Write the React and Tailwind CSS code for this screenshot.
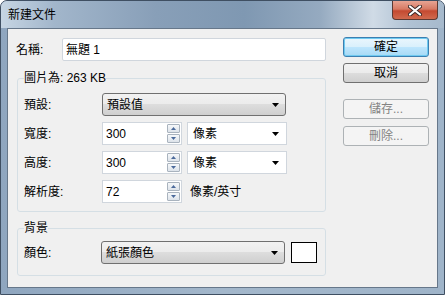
import React from 'react';

const Arrow = () => (
  <svg width="7" height="4" viewBox="0 0 7 4" className="shrink-0">
    <polygon points="0,0 7,0 3.5,4" fill="#000" />
  </svg>
);

const SpinBtn = ({ up }) => (
  <div className="flex h-[9px] w-[13px] items-center justify-center rounded-[1px] border border-[#a9b3be] bg-[linear-gradient(#f6f8fa,#dde3ea)]">
    <svg width="5" height="3" viewBox="0 0 5 3">
      <polygon points={up ? '0,3 5,3 2.5,0' : '0,0 5,0 2.5,3'} fill="#4b6a9b" />
    </svg>
  </div>
);

const Spinner = ({ value }) => (
  <div className="flex h-[23px] w-[80px] items-center border border-[#d0d6dd] bg-white pl-[3px] pr-[1px]">
    <span className="flex-1">{value}</span>
    <div className="flex flex-col gap-[1px]">
      <SpinBtn up />
      <SpinBtn />
    </div>
  </div>
);

const UnitSelect = ({ value }) => (
  <div className="flex h-[23px] w-[100px] items-center justify-between border border-[#d0d6dd] bg-white pl-[5px] pr-[7px]">
    <span>{value}</span>
    <Arrow />
  </div>
);

const ComboButton = ({ value, width }) => (
  <div
    className={`flex h-[23px] ${width} items-center justify-between rounded-[3px] border border-[#707070] bg-[linear-gradient(#f2f2f2_0%,#ebebeb_50%,#dddddd_50%,#cfcfcf_100%)] pl-[4px] pr-[6px]`}
  >
    <span>{value}</span>
    <Arrow />
  </div>
);

const Row = ({ label, children }) => (
  <div className="flex h-[23px] items-center">
    <span className="w-[78px]">{label}</span>
    {children}
  </div>
);

const DialogButton = ({ children, kind }) => {
  const styles = {
    default: 'border-[#3c7fb1] bg-[linear-gradient(#eaf6fd_0%,#d9f0fc_50%,#bee6fd_50%,#a7d9f5_100%)] shadow-[inset_0_0_0_1px_#6fcaf0] text-black',
    normal: 'border-[#707070] bg-[linear-gradient(#f2f2f2_0%,#ebebeb_50%,#dddddd_50%,#cfcfcf_100%)] text-black',
    disabled: 'border-[#adb2b5] bg-[#f4f4f4] text-[#838383]',
  };
  return (
    <div className={`flex h-[20px] w-[86px] items-center justify-center rounded-[3px] border ${styles[kind]}`}>
      {children}
    </div>
  );
};

export default function App() {
  return (
    <div className="flex h-[295px] w-[445px] flex-col overflow-hidden rounded-t-[7px] border border-[#3f4f62] bg-[linear-gradient(90deg,#8fa6bf_0%,#a3b7cb_50%,#9fb4c9_100%)] font-['Liberation_Sans','Noto_Sans_CJK_TC',sans-serif] text-[12px] leading-none text-black">
      {/* title bar */}
      <div className="flex h-[27px] items-start justify-between bg-[linear-gradient(90deg,#c6d5e3_0%,#a2b6cb_12%,#889fb8_35%,#7f98b2_55%,#95aac0_72%,#d0dbe6_84%,#b0c2d4_92%,#a6b9cc_100%)]">
        <span className="ml-[7px] mt-[8px] text-[12px]">新建文件</span>
        <div className="mr-[6px] flex h-[19px] w-[46px] items-center justify-center rounded-b-[4px] border border-t-0 border-[#5b3a33] bg-[linear-gradient(#e8a493_0%,#d77a64_45%,#c44a31_55%,#d06a4e_100%)]">
          <svg width="14" height="11" viewBox="0 0 14 11">
            <path d="M2 1.5 L12 9.5 M12 1.5 L2 9.5" stroke="#3b2a28" strokeWidth="4" strokeLinecap="round" />
            <path d="M2 1.5 L12 9.5 M12 1.5 L2 9.5" stroke="#ffffff" strokeWidth="2.2" strokeLinecap="round" />
          </svg>
        </div>
      </div>

      {/* client area */}
      <div className="mx-[6px] flex flex-1 border border-[#66778a] bg-[#f0f0f0]">
        <div className="flex w-[318px] flex-col pl-[8px] pt-[9px]">
          <div className="flex h-[23px] items-center">
            <span className="w-[46px]">名稱:</span>
            <div className="flex h-[23px] w-[264px] items-center rounded-[2px] border border-[#d0d6dd] bg-white pl-[3px]">
              無題 1
            </div>
          </div>

          <fieldset className="ml-[1px] mt-[9px] w-[309px] rounded-[3px] border border-[#d5dfe5] px-[6px] pb-[8px] pt-[7px]">
            <legend className="leading-[16px]">圖片為: 263 KB</legend>
            <div className="flex flex-col gap-[6px]">
              <Row label="預設:">
                <ComboButton value="預設值" width="w-[184px]" />
              </Row>
              <Row label="寬度:">
                <Spinner value="300" />
                <div className="ml-[5px]">
                  <UnitSelect value="像素" />
                </div>
              </Row>
              <Row label="高度:">
                <Spinner value="300" />
                <div className="ml-[5px]">
                  <UnitSelect value="像素" />
                </div>
              </Row>
              <Row label="解析度:">
                <Spinner value="72" />
                <span className="ml-[8px]">像素/英寸</span>
              </Row>
            </div>
          </fieldset>

          <fieldset className="ml-[1px] mt-[8px] w-[309px] rounded-[3px] border border-[#d5dfe5] px-[6px] pb-[11px] pt-[5px]">
            <legend className="leading-[16px]">背景</legend>
            <div className="flex h-[23px] items-center">
              <span className="w-[77px]">顏色:</span>
              <ComboButton value="紙張顏色" width="w-[184px]" />
              <div className="ml-[6px] h-[21px] w-[26px] border border-black bg-white" />
            </div>
          </fieldset>
        </div>

        <div className="ml-[17px] flex flex-col pt-[8px]">
          <DialogButton kind="default">確定</DialogButton>
          <div className="mt-[6px]">
            <DialogButton kind="normal">取消</DialogButton>
          </div>
          <div className="mt-[16px]">
            <DialogButton kind="disabled">儲存...</DialogButton>
          </div>
          <div className="mt-[7px]">
            <DialogButton kind="disabled">刪除...</DialogButton>
          </div>
        </div>
      </div>
      <div className="h-[6px]" />
    </div>
  );
}
